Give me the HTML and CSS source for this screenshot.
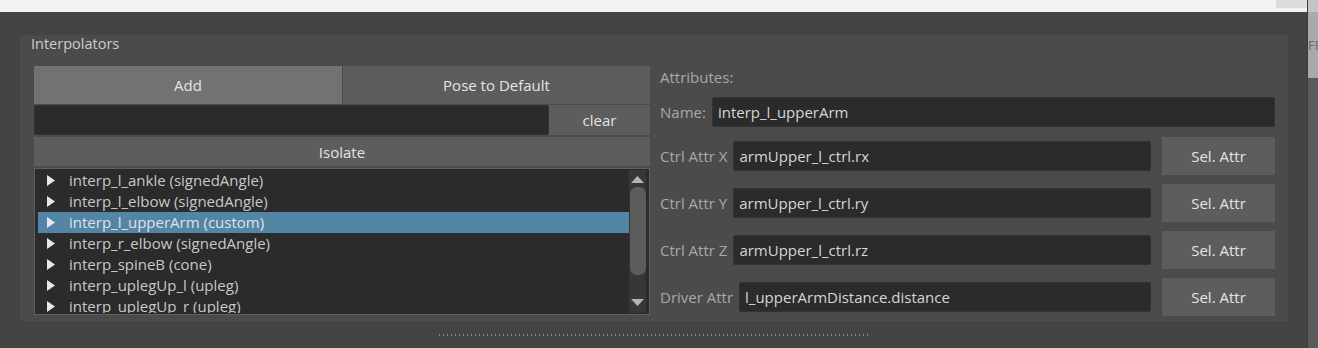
FILE: index.html
```html
<!DOCTYPE html>
<html lang="en">
<head>
  <meta charset="UTF-8">
  <title>Interpolators</title>
  <link rel="stylesheet" href="styles.css">
</head>
<body>
  <div class="screen">
    <div class="window">
      <div class="titlebar"><span class="titlebar-btn"></span></div>
      <div class="window-body">
        <div class="group">
          <div class="group-title">Interpolators</div>
          <div class="group-body">

            <!-- left: list of interpolators -->
            <div class="col-left">
              <div class="btn-row">
                <button class="btn btn-add">Add</button>
                <button class="btn btn-pose">Pose to Default</button>
              </div>
              <div class="filter-row">
                <div class="field filter-field"></div>
                <button class="btn btn-clear">clear</button>
              </div>
              <button class="btn btn-isolate">Isolate</button>
              <div class="list">
                <ul class="list-items">
                  <li class="list-item"><svg class="arrow" viewBox="0 0 8 11"><polygon points="0,0 8,5.5 0,11"/></svg>interp_l_ankle (signedAngle)</li>
                  <li class="list-item"><svg class="arrow" viewBox="0 0 8 11"><polygon points="0,0 8,5.5 0,11"/></svg>interp_l_elbow (signedAngle)</li>
                  <li class="list-item selected"><svg class="arrow" viewBox="0 0 8 11"><polygon points="0,0 8,5.5 0,11"/></svg>interp_l_upperArm (custom)</li>
                  <li class="list-item"><svg class="arrow" viewBox="0 0 8 11"><polygon points="0,0 8,5.5 0,11"/></svg>interp_r_elbow (signedAngle)</li>
                  <li class="list-item"><svg class="arrow" viewBox="0 0 8 11"><polygon points="0,0 8,5.5 0,11"/></svg>interp_spineB (cone)</li>
                  <li class="list-item"><svg class="arrow" viewBox="0 0 8 11"><polygon points="0,0 8,5.5 0,11"/></svg>interp_uplegUp_l (upleg)</li>
                  <li class="list-item"><svg class="arrow" viewBox="0 0 8 11"><polygon points="0,0 8,5.5 0,11"/></svg>interp_uplegUp_r (upleg)</li>
                </ul>
                <div class="scrollbar">
                  <svg class="scroll-arrow" viewBox="0 0 13 7"><polygon points="0,7 6.5,0 13,7"/></svg>
                  <div class="scroll-track"><div class="scroll-thumb"></div></div>
                  <svg class="scroll-arrow" viewBox="0 0 13 7"><polygon points="0,0 13,0 6.5,7"/></svg>
                </div>
              </div>
            </div>

            <!-- right: attributes of selected item -->
            <div class="col-right">
              <div class="attr-title">Attributes:</div>
              <div class="name-row">
                <span class="label">Name:</span>
                <div class="field">interp_l_upperArm</div>
              </div>
              <div class="attr-rows">
                <div class="attr-row">
                  <span class="label">Ctrl Attr X</span>
                  <div class="field">armUpper_l_ctrl.rx</div>
                  <button class="btn btn-sel">Sel. Attr</button>
                </div>
                <div class="attr-row">
                  <span class="label">Ctrl Attr Y</span>
                  <div class="field">armUpper_l_ctrl.ry</div>
                  <button class="btn btn-sel">Sel. Attr</button>
                </div>
                <div class="attr-row">
                  <span class="label">Ctrl Attr Z</span>
                  <div class="field">armUpper_l_ctrl.rz</div>
                  <button class="btn btn-sel">Sel. Attr</button>
                </div>
                <div class="attr-row">
                  <span class="label">Driver Attr</span>
                  <div class="field">l_upperArmDistance.distance</div>
                  <button class="btn btn-sel">Sel. Attr</button>
                </div>
              </div>
            </div>

          </div>
        </div>
        <div class="splitter"></div>
      </div>
    </div>
    <div class="side">
      <div class="side-top"></div>
      <div class="side-tab">FPS</div>
      <div class="side-rest"></div>
    </div>
  </div>
</body>
</html>
```

FILE: styles.css
```css
* {
  box-sizing: border-box;
}

body {
  margin: 0;
  background: #444444;
  font-family: 'Open Sans', 'Noto Sans', sans-serif;
  font-size: 15px;
  color: #c8c8c8;
  overflow: hidden;
}

.screen {
  display: flex;
  height: 348px;
}

.window {
  width: 1308px;
  display: flex;
  flex-direction: column;
  border-right: 1px solid #3a3a3a;
}

.titlebar {
  height: 12px;
  background: #f2f2f2;
  display: flex;
  justify-content: flex-end;
}

.titlebar-btn {
  width: 31px;
  height: 8px;
  background: #dcdcdc;
}

.window-body {
  flex: 1;
  background: #444444;
  padding: 30px 19px 0 20px;
}

.group {
  height: 286px;
  background: #4b4b4b;
  padding: 0 13px 13px 14px;
}

.group-title {
  height: 18px;
  line-height: 18px;
  margin: -7px 0 0 -3px;
  font-size: 14.5px;
  color: #cdcdcd;
}

.group-body {
  display: flex;
  margin-top: 13px;
}

/* buttons */
.btn {
  border: none;
  margin: 0;
  padding: 0;
  font-family: inherit;
  font-size: 15px;
  color: #e4e4e4;
  background: #5d5d5d;
}

/* left column */
.col-left {
  width: 616px;
  display: flex;
  flex-direction: column;
}

.btn-row {
  display: flex;
  height: 38px;
  gap: 1px;
}

.btn-add {
  width: 308px;
  background: #727272;
}

.btn-pose {
  flex: 1;
}

.filter-row {
  display: flex;
  height: 30px;
  margin-top: 1px;
}

.filter-field {
  flex: 1;
  border-radius: 0;
}

.btn-clear {
  width: 101px;
}

.btn-isolate {
  height: 29px;
  margin-top: 2px;
}

.list {
  height: 147px;
  margin-top: 2px;
  background: #2b2b2b;
  border: 1px solid #5f5f5f;
  padding: 1px 3px 1px 3px;
  display: flex;
}

.list-items {
  flex: 1;
  list-style: none;
  margin: 0;
  padding: 0;
  overflow: hidden;
}

.list-item {
  height: 21px;
  line-height: 21px;
  font-size: 15px;
  color: #c8c8c8;
  display: flex;
  align-items: center;
  white-space: nowrap;
}

.list-item.selected {
  background: #5285a6;
  color: #e2e2e2;
}

.arrow {
  width: 8px;
  height: 11px;
  margin: 0 14px 0 9px;
  fill: #e8e8e8;
}

.scrollbar {
  width: 17px;
  background: #373737;
  display: flex;
  flex-direction: column;
  align-items: center;
  padding: 6px 0 7px;
}

.scroll-arrow {
  width: 13px;
  height: 7px;
  fill: #b4b4b4;
}

.scroll-track {
  flex: 1;
  width: 100%;
  padding: 4px 0 0 1px;
}

.scroll-thumb {
  height: 88px;
  background: #5c5c5c;
  border-radius: 7px;
}

/* right column */
.col-right {
  width: 615px;
  margin-left: 10px;
  display: flex;
  flex-direction: column;
}

.attr-title {
  height: 31px;
  padding-top: 1px;
  line-height: 20px;
  color: #a8a8a8;
}

.label {
  color: #a8a8a8;
  margin-right: 6px;
  white-space: nowrap;
}

.field {
  height: 30px;
  line-height: 28px;
  background: #2b2b2b;
  border: 1px solid #333333;
  border-radius: 2px;
  padding-left: 5px;
  font-size: 15px;
  color: #d6d6d6;
}

.name-row {
  display: flex;
  align-items: center;
  height: 30px;
}

.name-row .field {
  flex: 1;
}

.attr-rows {
  display: flex;
  flex-direction: column;
  gap: 9px;
  margin-top: 10px;
}

.attr-row {
  display: flex;
  align-items: center;
  height: 38px;
}

.attr-row .field {
  flex: 1;
}

.btn-sel {
  width: 113px;
  height: 38px;
  margin-left: 11px;
}

.splitter {
  width: 430px;
  height: 2px;
  margin: 13px auto 0;
  background: repeating-linear-gradient(to right, #8a8a8a 0 1px, transparent 1px 4px);
}

/* right edge strip */
.side {
  width: 10px;
  display: flex;
  flex-direction: column;
  overflow: hidden;
}

.side-top {
  height: 12px;
  background: #c4c4c4;
}

.side-tab {
  height: 66px;
  background: #a9a9a9;
  color: #6a6a6a;
  font-size: 13px;
  line-height: 66px;
  white-space: nowrap;
}

.side-rest {
  flex: 1;
  background: #5a5a5a;
}
```
